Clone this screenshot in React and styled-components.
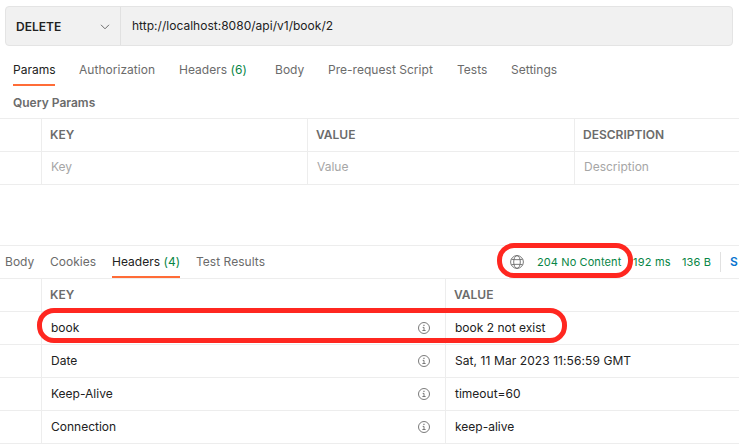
import React from 'react';
import styled, { createGlobalStyle } from 'styled-components';

const Global = createGlobalStyle`
  * { box-sizing: border-box; }
  body {
    margin: 0;
    background: #fff;
    color: #212121;
    font: 400 12px/16px Inter, sans-serif;
    overflow: hidden;
  }
`;

const Page = styled.main`
  position: relative;
  width: 739px;
  height: 448px;
  overflow: hidden;
  display: flex;
  flex-direction: column;
`;

const UrlBar = styled.div`
  display: flex;
  flex: none;
  width: 728px;
  height: 40px;
  margin: 6px 0 0 5px;
  border: 1px solid #e4e4e4;
  border-radius: 4px;
  background: #f1f1f1;
`;

const Method = styled.div`
  display: flex;
  align-items: center;
  justify-content: space-between;
  width: 115px;
  padding: 1px 10px 0 10px;
  border-right: 1px solid #e1e1e1;
  font-weight: 600;
`;

const Url = styled.div`
  padding: 11px;
  letter-spacing: 0.02px;
`;

const RequestTabs = styled.nav`
  display: flex;
  flex: none;
  height: 40px;
  padding-left: 13px;
`;

const Tab = styled.div`
  flex: none;
  width: ${(p) => p.$width}px;
  margin-right: ${(p) => p.$gap}px;
  padding-top: ${(p) => p.$top}px;
  border-bottom: 2px solid ${(p) => (p.$active ? '#ff6c37' : 'transparent')};
  color: ${(p) => (p.$active ? '#212121' : '#6b6b6b')};
  letter-spacing: 0.03px;
  white-space: nowrap;
`;

const Green = styled.span`
  color: #078545;
`;

const SectionTitle = styled.h2`
  flex: none;
  height: 32px;
  margin: 0;
  padding: 9px 0 0 13px;
  color: #6b6b6b;
  font-size: 12px;
  font-weight: 600;
  line-height: 16px;
`;

const Table = styled.div`
  display: grid;
  flex: none;
  grid-template-columns: ${(p) => p.$columns};
  grid-auto-rows: 33px;
  border-top: ${(p) => (p.$topLine ? '1px solid #ededed' : '0')};
`;

const Cell = styled.div`
  display: flex;
  align-items: center;
  justify-content: space-between;
  padding: 0 15px ${(p) => (p.$muted ? 2 : 0)}px 9px;
  border-right: ${(p) => (p.$last ? '0' : '1px solid #ededed')};
  border-bottom: 1px solid #ededed;
  color: ${(p) => (p.$muted ? '#a6a6a6' : '#212121')};
  letter-spacing: ${(p) => p.$spacing || 0}px;
  white-space: nowrap;
`;

const HeadCell = styled(Cell)`
  padding-left: 8px;
  color: #6b6b6b;
  font-weight: 600;
`;

const ResponseBar = styled.section`
  display: flex;
  flex: none;
  height: 34px;
  margin-top: 60px;
  padding-left: 5px;
  border-top: 1px solid #ededed;
  border-bottom: 1px solid #ededed;
`;

const Status = styled.div`
  display: flex;
  align-items: center;
  flex: none;
  width: 229px;
  margin-left: auto;
  color: #078545;
  white-space: nowrap;
`;

const StatusText = styled.span`
  flex: none;
  width: ${(p) => p.$width}px;
  font-size: 11px;
  letter-spacing: ${(p) => p.$spacing || 0}px;
`;

const GlobeSlot = styled.span`
  display: flex;
  width: 27px;
`;

const Save = styled.span`
  width: 19px;
  height: 20px;
  padding-left: 9px;
  border-left: 1px solid #e1e1e1;
  color: #0874cf;
  font-weight: 600;
  line-height: 20px;
`;

const Marker = styled.div`
  position: absolute;
  left: ${(p) => p.$x}px;
  top: ${(p) => p.$y}px;
  width: ${(p) => p.$w}px;
  height: ${(p) => p.$h}px;
  border: 5px solid #ff2720;
  border-radius: 17px;
  pointer-events: none;
`;

const Chevron = () => (
  <svg width="10" height="6" viewBox="0 0 10 6" fill="none" stroke="#6b6b6b">
    <path d="M1 .8 5 4.8 9 .8" />
  </svg>
);

const Globe = () => (
  <svg width="14" height="14" viewBox="0 0 14 14" fill="none" stroke="#6b6b6b" strokeWidth=".9">
    <circle cx="7" cy="7" r="6.4" />
    <ellipse cx="7" cy="7" rx="3.3" ry="6.4" />
    <path d="M1.3 4.3c3.4.5 8 .5 11.4 0M1.3 9.7c3.4-.5 8-.5 11.4 0" />
  </svg>
);

const Info = () => (
  <svg width="12" height="12" viewBox="0 0 12 12" fill="none" stroke="#6b6b6b" strokeWidth=".9">
    <circle cx="6" cy="6" r="5.5" />
    <path d="M4.7 5.4H6v3M4.4 8.5h3.2" />
    <path d="M5.4 3.4h1.1" strokeWidth="1.1" />
  </svg>
);

const requestTabs = [
  ['Params', 42, 24, true],
  ['Authorization', 76, 24],
  ['Headers', 68, 28, false, '(6)'],
  ['Body', 29, 24],
  ['Pre-request Script', 105, 24],
  ['Tests', 30, 24],
  ['Settings', 47, 0],
];

const responseTabs = [
  ['Body', 29, 16],
  ['Cookies', 46, 16],
  ['Headers', 68, 16, true, '(4)'],
  ['Test Results', 69, 0],
];

const headers = [
  ['book', 'book 2 not exist'],
  ['Date', 'Sat, 11 Mar 2023 11:56:59 GMT', 0.08],
  ['Keep-Alive', 'timeout=60'],
  ['Connection', 'keep-alive'],
];

const Tabs = ({ items, top }) =>
  items.map(([label, width, gap, active, count]) => (
    <Tab key={label} $width={width} $gap={gap} $active={active} $top={top}>
      {label}
      {count && <Green> {count}</Green>}
    </Tab>
  ));

export default function App() {
  return (
    <Page>
      <Global />
      <UrlBar>
        <Method>DELETE<Chevron /></Method>
        <Url>http://localhost:8080/api/v1/book/2</Url>
      </UrlBar>
      <RequestTabs><Tabs items={requestTabs} top={16} /></RequestTabs>
      <SectionTitle>Query Params</SectionTitle>
      <Table $columns="42px 266px 267px 1fr" $topLine>
        <HeadCell />
        <HeadCell>KEY</HeadCell>
        <HeadCell>VALUE</HeadCell>
        <HeadCell $last>DESCRIPTION</HeadCell>
        <Cell />
        <Cell $muted>Key</Cell>
        <Cell $muted>Value</Cell>
        <Cell $muted $last>Description</Cell>
      </Table>
      <ResponseBar>
        <Tabs items={responseTabs} top={8} />
        <Status>
          <GlobeSlot><Globe /></GlobeSlot>
          <StatusText $width={96} $spacing={0.1}>204 No Content</StatusText>
          <StatusText $width={49} $spacing={0.2}>192 ms</StatusText>
          <StatusText $width={38} $spacing={0.15}>136 B</StatusText>
          <Save>S</Save>
        </Status>
      </ResponseBar>
      <Table $columns="42px 404px 1fr">
        <HeadCell />
        <HeadCell>KEY</HeadCell>
        <HeadCell $last>VALUE</HeadCell>
        {headers.map(([key, value, spacing]) => (
          <React.Fragment key={key}>
            <Cell />
            <Cell>{key}<Info /></Cell>
            <Cell $last $spacing={spacing}>{value}</Cell>
          </React.Fragment>
        ))}
      </Table>
      <Marker $x={497} $y={243} $w={136} $h={35} />
      <Marker $x={37} $y={308} $w={530} $h={35} />
    </Page>
  );
}
